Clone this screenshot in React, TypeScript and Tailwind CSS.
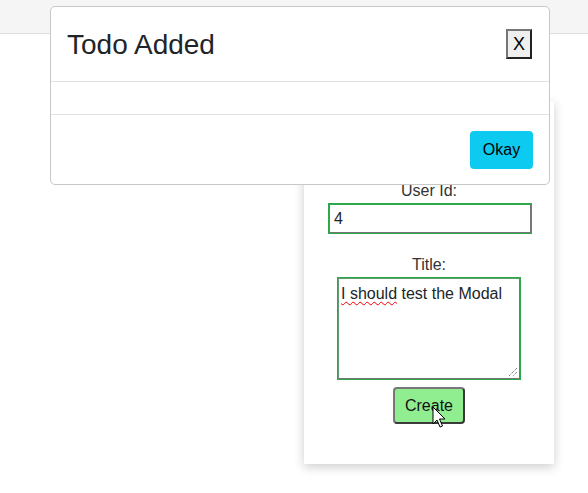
export default function App() {
  return (
    <div className="relative h-[493px] w-[588px] overflow-hidden bg-white font-['Liberation_Sans',Arial,sans-serif] text-[#212529]">
      {/* top bar */}
      <div className="h-[34px] border-b border-[#dedede] bg-[#f5f5f5]" />

      {/* add todo card */}
      <div className="ml-[304px] mt-[67px] flex w-[250px] flex-col items-center bg-white pb-[40px] pt-[81px] shadow-[0_3px_10px_rgba(0,0,0,0.2)]">
        <label className="text-base leading-[18px] text-[#333]">User Id:</label>
        <div className="ml-[2px] mt-[3px] flex h-[31px] w-[204px] items-center border-2 border-[#2ea84a] border-b-[#767676] border-r-[#767676] px-[4px] outline outline-1 outline-[#2ea84a] -outline-offset-1">
          <span className="text-base">4</span>
        </div>
        <label className="mt-[22px] text-base leading-[18px] text-[#333]">Title:</label>
        <div className="relative mt-[3px] h-[103px] w-[184px] border-2 border-[#5b9d6b] border-b-[#767676] border-r-[#767676] px-[2px] pt-[3px] outline outline-1 outline-[#2ea84a] -outline-offset-1">
          <span className="text-base leading-[18px]">
            <span className="underline decoration-wavy decoration-[#e00] decoration-1 underline-offset-2">I should</span> test the Modal
          </span>
          <svg className="absolute bottom-[1px] right-[1px]" width="10" height="10" viewBox="0 0 10 10">
            <path d="M9 1L1 9M9 5L5 9" stroke="#555" strokeWidth="1" strokeDasharray="1 1" />
          </svg>
        </div>
        <button className="mt-[7px] h-[37px] w-[72px] rounded-[4px] border-2 border-[#3a3a3a] border-l-[#777] border-t-[#777] bg-[#90ee90] text-base text-[#111]">
          Create
        </button>
      </div>

      {/* mouse cursor */}
      <svg className="absolute left-[432px] top-[406px]" width="14" height="24" viewBox="0 0 14 24">
        <path d="M1 1V18L5 14L8 21L10.5 20L7.5 13H13Z" fill="#fff" stroke="#000" strokeWidth="1" strokeLinejoin="round" />
      </svg>

      {/* modal */}
      <div className="absolute left-[50px] top-[6px] w-[500px] rounded-[5px] border border-[#c8c8c8] bg-white">
        <div className="flex h-[75px] items-center justify-between border-b border-[#dee2e6] pl-[16px] pr-[17px]">
          <h2 className="text-[28px] leading-[33px] text-[#212529]">Todo Added</h2>
          <button className="flex h-[30px] w-[26px] items-center justify-center border-2 border-[#767676] border-b-[#222] border-r-[#222] bg-[#efefef] text-[18px] text-black">
            X
          </button>
        </div>
        <div className="h-[33px] border-b border-[#dee2e6]" />
        <div className="flex justify-end px-[16px] pb-[15px] pt-[16px]">
          <button className="h-[38px] w-[63px] rounded-[4px] bg-[#0dcaf0] text-base text-black">Okay</button>
        </div>
      </div>
    </div>
  );
}
